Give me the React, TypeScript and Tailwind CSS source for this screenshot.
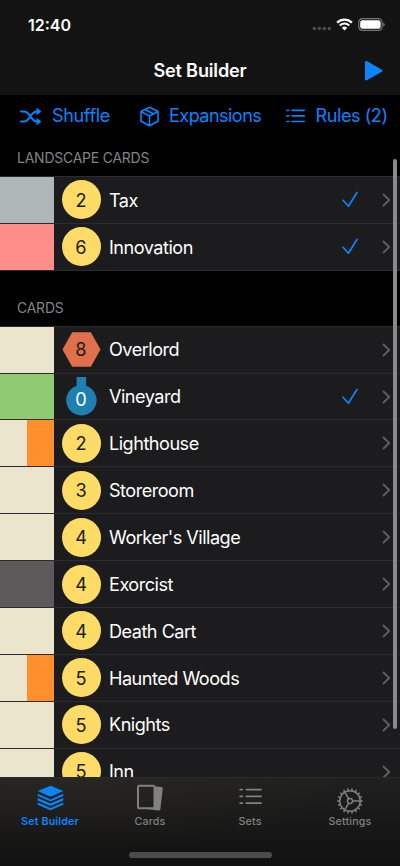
import type { ReactNode } from 'react';

type Cost = 'coin' | 'debt' | 'potion';
interface Card {
  name: string;
  cost: string;
  kind?: Cost;
  color: string;
  accent?: string;
  checked?: boolean;
}

const CREAM = 'bg-[#ebe5ce]';
const ORANGE = 'bg-[#ff8f2b]';

const landscape: Card[] = [
  { name: 'Tax', cost: '2', color: 'bg-[#aeb7b6]', checked: true },
  { name: 'Innovation', cost: '6', color: 'bg-[#ff8d89]', checked: true },
];

const cards: Card[] = [
  { name: 'Overlord', cost: '8', kind: 'debt', color: CREAM },
  { name: 'Vineyard', cost: '0', kind: 'potion', color: 'bg-[#90cb72]', checked: true },
  { name: 'Lighthouse', cost: '2', color: CREAM, accent: ORANGE },
  { name: 'Storeroom', cost: '3', color: CREAM },
  { name: "Worker's Village", cost: '4', color: CREAM },
  { name: 'Exorcist', cost: '4', color: 'bg-[#5d5859]' },
  { name: 'Death Cart', cost: '4', color: CREAM },
  { name: 'Haunted Woods', cost: '5', color: CREAM, accent: ORANGE },
  { name: 'Knights', cost: '5', color: CREAM },
  { name: 'Inn', cost: '5', color: CREAM },
];

function CostBadge({ cost, kind = 'coin' }: { cost: string; kind?: Cost }) {
  if (kind === 'coin') {
    return (
      <span className="flex size-[39px] items-center justify-center rounded-full bg-[#fddb67] pt-px text-[18.2px] text-[#1c1c1e]">
        {cost}
      </span>
    );
  }
  return (
    <span className="relative flex size-[39px] items-center justify-center text-[18.2px]">
      <svg className="absolute inset-0" width="39" height="39" viewBox="0 0 39 39">
        {kind === 'debt' ? (
          <path d="M10.2 2.3h18.6l9.7 17.2-9.7 17.2H10.2L.5 19.5z" fill="#e0704b" />
        ) : (
          <path d="M14.6 0h9.6v8.8a15.2 15.2 0 1 1-9.6 0z" fill="#1f7fb1" />
        )}
      </svg>
      <span className={kind === 'debt' ? 'relative pt-px text-[#1c1c1e]' : 'relative pt-[7px] text-white'}>{cost}</span>
    </span>
  );
}

function CardRow({ card }: { card: Card }) {
  return (
    <li className="flex h-[46.9px] shrink-0 items-center border-t border-[#2c2c2e] bg-[#1c1c1e]">
      <span className={`flex h-full w-[53.5px] shrink-0 justify-end ${card.color}`}>
        {card.accent && <span className={`h-full w-[26.5px] ${card.accent}`} />}
      </span>
      <span className="ml-[8px]">
        <CostBadge cost={card.cost} kind={card.kind} />
      </span>
      <span className="ml-[8.5px] flex-1 whitespace-nowrap pt-[0.6px] text-[18.1px] tracking-[-0.5px] text-white">{card.name}</span>
      {card.checked && (
        <svg className="mr-[24px]" width="16" height="17" viewBox="0 0 16 17" fill="none" stroke="#0a84ff" strokeWidth="1.7" strokeLinecap="round" strokeLinejoin="round">
          <path d="M1 9.2l5.4 6L15 1.5" />
        </svg>
      )}
      <svg className="mr-[9px]" width="9" height="14" viewBox="0 0 9 14" fill="none" stroke="#5f5f63" strokeWidth="1.9" strokeLinecap="round" strokeLinejoin="round">
        <path d="M1.5 1.5L7.2 7l-5.7 5.5" />
      </svg>
    </li>
  );
}

function ListIcon({ className, width, height, weight }: { className?: string; width: number; height: number; weight: number }) {
  return (
    <svg className={className} width={width} height={height} viewBox="0 0 23 17" fill="none" stroke="currentColor" strokeWidth={weight} strokeLinecap="round" preserveAspectRatio="none">
      <path d="M1.2 1.6h2M7.4 1.6h14.6M1.2 8.4h2M7.4 8.4h14.6M1.2 15.2h2M7.4 15.2h14.6" />
    </svg>
  );
}

function GearIcon() {
  const teeth = Array.from({ length: 18 }, (_, i) => i * 20 + 10);
  return (
    <svg width="26" height="26" viewBox="-13 -13 26 26" fill="none" stroke="currentColor">
      <circle r="10.3" strokeWidth="1.5" />
      {teeth.map((a) => (
        <path key={a} d="M0-10.9v-1.8" strokeWidth="1.6" transform={`rotate(${a})`} />
      ))}
      <circle r="2.5" strokeWidth="1.4" />
      <path d="M2.8 0h7.2M-1.4-2.4l-3.7 -6.3M-1.4 2.4l-3.7 6.3" strokeWidth="1.5" />
    </svg>
  );
}

function Tab({ label, active, children }: { label: string; active?: boolean; children: ReactNode }) {
  return (
    <div className={`flex w-[100px] flex-col items-center ${active ? 'text-[#0a84ff]' : 'text-[#818181]'}`}>
      <span className="flex h-[37px] w-full items-center justify-center">{children}</span>
      <span className={`text-[10.7px] leading-[14px] tracking-[0.15px] ${active ? 'font-semibold' : 'font-medium'}`}>{label}</span>
    </div>
  );
}

export default function App() {
  return (
    <div className="relative flex h-[866px] w-[400px] flex-col overflow-hidden bg-black font-['Inter',sans-serif]">
      <header className="h-[95px] shrink-0 bg-[#131313] text-white">
        <div className="flex h-[47px] items-center justify-between pt-[2px] pr-[15px] pl-[28px]">
          <span className="text-[16px] font-semibold">12:40</span>
          <div className="flex items-center">
            <svg className="mt-[8px]" width="20" height="5" viewBox="0 0 20 5" fill="#4b4b4b">
              <circle cx="2.3" cy="2.5" r="1.8" />
              <circle cx="7.3" cy="2.5" r="1.8" />
              <circle cx="12.3" cy="2.5" r="1.8" />
              <circle cx="17.3" cy="2.5" r="1.8" />
            </svg>
            <svg className="ml-[4px]" width="17" height="13" viewBox="0 0 17 13" fill="none" stroke="white">
              <path d="M1.1 4.6a10.6 10.6 0 0 1 14.8 0" strokeWidth="2.3" />
              <path d="M3.8 7.4a6.7 6.7 0 0 1 9.4 0" strokeWidth="2.1" />
              <path d="M8.5 12.5L5.8 9.8a3.9 3.9 0 0 1 5.4 0z" fill="white" stroke="none" />
            </svg>
            <svg className="ml-[5px]" width="27" height="13" viewBox="0 0 27 13" fill="none">
              <rect x=".7" y=".7" width="23.4" height="11.6" rx="3.7" stroke="#777" strokeWidth="1.2" />
              <rect x="2.2" y="2.2" width="20.4" height="8.6" rx="2.2" fill="white" />
              <path d="M25.2 4.4c2 .8 2 3.4 0 4.2z" fill="#777" />
            </svg>
          </div>
        </div>
        <div className="grid h-[48px] grid-cols-[60px_1fr_60px] items-center">
          <h1 className="col-start-2 text-center text-[18.1px] font-semibold tracking-[-0.17px]">Set Builder</h1>
          <svg className="ml-[24px]" width="20" height="22" viewBox="0 0 20 22" fill="#0a84ff">
            <path d="M1 2.1C1 1 1.8.6 2.8 1.1l15 8.6c1 .6 1 1.5 0 2.1l-15 8.5c-1 .5-1.8.1-1.8-1z" />
          </svg>
        </div>
      </header>

      <nav className="flex h-[42px] shrink-0 items-center text-[18.1px] tracking-[-0.38px] text-[#0a84ff]">
        <svg className="ml-[20px]" width="22" height="19" viewBox="0 0 22 19" fill="none" stroke="currentColor" strokeWidth="2" strokeLinecap="round" strokeLinejoin="round">
          <path d="M1 4.4h3.2c2 0 3 .9 4.1 2.3l4.2 5.5c1.1 1.4 2.1 2.3 4.1 2.3h1.2M1 14.5h3.2c2 0 3-.9 4.1-2.3l4.2-5.5c1.1-1.4 2.1-2.3 4.1-2.3h1.2" />
          <path d="M17.2 1.7L20.8 4.4l-3.6 2.8zM17.2 11.8l3.6 2.7-3.6 2.8z" fill="currentColor" strokeWidth="1" />
        </svg>
        <span className="ml-[10px] w-[58px] whitespace-nowrap">Shuffle</span>
        <svg className="ml-[29px]" width="21" height="21" viewBox="0 0 21 21" fill="none" stroke="currentColor" strokeWidth="1.6" strokeLinejoin="round" strokeLinecap="round">
          <path d="M10.5 1.2l8.5 4.3v9.7l-8.5 4.6L2 15.2V5.5zM2 5.5l8.5 4.6L19 5.5M10.5 10.1v9.7M6.1 3.5l8.6 4.5" />
        </svg>
        <span className="ml-[9px] w-[92px] whitespace-nowrap tracking-[-0.56px]">Expansions</span>
        <ListIcon className="ml-[25px]" width={19} height={14} weight={2} />
        <span className="ml-[10.5px] whitespace-nowrap tracking-[-0.45px]">Rules (2)</span>
      </nav>

      <main className="flex min-h-0 flex-1 flex-col">
        <h2 className="h-[39px] shrink-0 pt-[11px] pl-[17px] text-[13.9px] leading-[20px] tracking-[-0.17px] text-[#848488]">LANDSCAPE CARDS</h2>
        <ul className="flex shrink-0 flex-col border-b border-[#2c2c2e]">
          {landscape.map((card) => (
            <CardRow key={card.name} card={card} />
          ))}
        </ul>
        <h2 className="h-[54.9px] shrink-0 pt-[27px] pl-[17px] text-[13.9px] leading-[20px] tracking-[-0.17px] text-[#848488]">CARDS</h2>
        <ul className="flex min-h-0 flex-1 flex-col overflow-hidden">
          {cards.map((card) => (
            <CardRow key={card.name} card={card} />
          ))}
        </ul>
      </main>

      <footer className="flex h-[89px] shrink-0 flex-col items-center border-t border-[#2b2b2b] bg-[radial-gradient(ellipse_at_15%_0%,#5f573020,transparent_60%),linear-gradient(to_bottom,#202020,#111111)]">
        <div className="flex w-full">
          <Tab label="Set Builder" active>
            <svg className="mt-[2px]" width="27" height="26" viewBox="0 0 27 26" fill="currentColor">
              <path d="M13.5.8L26.3 6 13.5 11.8.7 6z" />
              <path d="M.7 8.7l12.8 5.8 12.8-5.8v2.4l-12.8 5.4L.7 11.1zM.7 13.1l12.8 5.5 12.8-5.5v2.3l-12.8 5.5L.7 15.4zM.7 17.5L13.5 23l12.8-5.5v2.3l-12.8 5.4L.7 19.8z" />
            </svg>
          </Tab>
          <Tab label="Cards">
            <svg className="mt-[2px]" width="28" height="28" viewBox="0 0 28 28" fill="none">
              <path d="M18 2.2l7.1.8q1.8.2 1.6 2l-2.3 20q-.2 1.8-2 1.6L10 25.2h8z" fill="currentColor" />
              <rect x="2" y="1.7" width="16.5" height="22.6" rx="1.2" stroke="currentColor" strokeWidth="2" />
            </svg>
          </Tab>
          <Tab label="Sets">
            <ListIcon width={23} height={17} weight={1.8} />
          </Tab>
          <Tab label="Settings">
            <span className="pt-[8px]"><GearIcon /></span>
          </Tab>
        </div>
        <div className="mt-[23px] h-[6px] w-[143px] rounded-full bg-[#4b4b4b]" />
      </footer>

      <div className="absolute top-[159px] right-[3px] h-[570px] w-[4px] rounded-full bg-[#8a8a8a]" />
    </div>
  );
}
